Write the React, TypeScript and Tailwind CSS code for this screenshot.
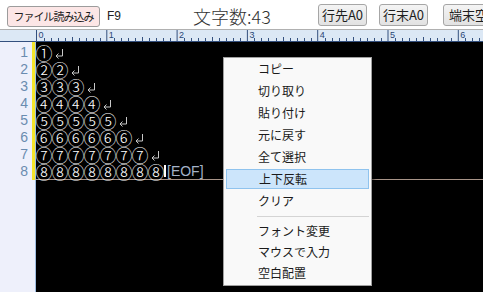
import React from 'react';

const JP = { fontFamily: '"Noto Sans CJK JP", "Noto Sans", sans-serif' };
const circled = ['①', '②', '③', '④', '⑤', '⑥', '⑦', '⑧'];
const menuTop = ['コピー', '切り取り', '貼り付け', '元に戻す', '全て選択', '上下反転', 'クリア'];
const menuBottom = ['フォント変更', 'マウスで入力', '空白配置'];

function ReturnMark() {
  return (
    <svg width="10" height="11" viewBox="0 0 10 11" className="ml-[2px] mt-[4px] shrink-0">
      <path d="M8.5 1 V8 H2" stroke="#c8c8c8" strokeWidth="1" fill="none" />
      <path d="M4.5 5.5 L2 8 L4.5 10.5" stroke="#c8c8c8" strokeWidth="1" fill="none" />
    </svg>
  );
}

function Ruler() {
  const majors = [0, 1, 2, 3, 4, 5, 6];
  return (
    <svg width="483" height="12" className="block">
      <rect x="0" y="0" width="483" height="12" fill="#dce8f5" />
      <line x1="0" y1="11.5" x2="483" y2="11.5" stroke="#34507e" strokeWidth="1" />
      {majors.map((m) => {
        const x = 36.5 + m * 70.3;
        return (
          <g key={m}>
            <line x1={x} y1="0" x2={x} y2="12" stroke="#34507e" strokeWidth="1" />
            <text x={x + 2} y="8" fontSize="9" fill="#2a4676" fontFamily="Liberation Sans, sans-serif">
              {m}
            </text>
            {[1, 2, 3, 4, 5, 6, 7, 8, 9].map((j) => (
              <line
                key={j}
                x1={Math.round(x + j * 7.03) + 0.5}
                y1={j === 5 ? 7 : 8}
                x2={Math.round(x + j * 7.03) + 0.5}
                y2="11"
                stroke="#34507e"
                strokeWidth="1"
              />
            ))}
          </g>
        );
      })}
    </svg>
  );
}

export default function App() {
  return (
    <div className="relative flex h-[292px] w-[483px] flex-col overflow-hidden bg-white">
      {/* toolbar */}
      <div className="flex h-[30px] shrink-0 items-start border-b border-[#b0b0b0] bg-white">
        <button
          className="ml-[7px] mt-[6px] flex h-[21px] w-[93px] shrink-0 items-center justify-center rounded-[3px] border border-[#9c9c9c] bg-[#fce6e6] text-[11px] tracking-[-1px] text-[#1e1e1e]"
          style={JP}
        >
          ファイル読み込み
        </button>
        <span className="ml-[7px] mt-[10px] w-[86px] shrink-0 text-[12px] leading-[12px] text-[#222]" style={{ fontFamily: '"Liberation Sans", sans-serif' }}>
          F9
        </span>
        <span className="mt-[5px] w-[125px] shrink-0 text-[18px] font-light leading-[22px] text-[#333]" style={JP}>
          文字数:43
        </span>
        <button
          className="mt-[4px] flex h-[22px] w-[49px] shrink-0 items-center justify-center rounded-[3px] border border-[#a6a6a6] bg-gradient-to-b from-[#f4f4f4] to-[#e2e2e2] text-[13px] text-[#1e1e1e]"
          style={JP}
        >
          行先A0
        </button>
        <button
          className="ml-[12px] mt-[4px] flex h-[22px] w-[49px] shrink-0 items-center justify-center rounded-[3px] border border-[#a6a6a6] bg-gradient-to-b from-[#f4f4f4] to-[#e2e2e2] text-[13px] text-[#1e1e1e]"
          style={JP}
        >
          行末A0
        </button>
        <button
          className="ml-[15px] mt-[4px] flex h-[22px] w-[49px] shrink-0 items-center justify-start rounded-[3px] border border-[#a6a6a6] bg-gradient-to-b from-[#f4f4f4] to-[#e2e2e2] pl-[5px] text-[13px] text-[#1e1e1e]"
          style={JP}
        >
          端末空
        </button>
      </div>

      {/* ruler */}
      <div className="h-[12px] shrink-0">
        <Ruler />
      </div>

      {/* editor */}
      <div className="flex flex-1">
        <div className="w-[32px] shrink-0 bg-[#eef0fb] pt-[2px]">
          {circled.map((_, i) => (
            <div
              key={i}
              className="h-[17px] pr-[4px] text-right text-[14px] leading-[17px] text-[#6a8cb0]"
              style={{ fontFamily: '"Liberation Sans", sans-serif' }}
            >
              {i + 1}
            </div>
          ))}
        </div>
        <div className="w-[3px] shrink-0 bg-[#eef0fb]">
          <div className="h-[138px] bg-[#f4e52a]" />
        </div>
        <div className="w-px shrink-0 bg-[#9fbde0]" />
        <div className="flex-1 bg-black pt-[2px]">
          {circled.map((c, i) => (
            <div
              key={i}
              className={`flex h-[17px] items-start ${i === 7 ? 'border-b border-[#a89488]' : ''}`}
            >
              {Array.from({ length: i + 1 }).map((_, k) => (
                <span
                  key={k}
                  className="flex h-[17px] w-[16px] shrink-0 items-center justify-center text-[17px] font-extralight leading-[17px] text-white"
                  style={JP}
                >
                  {c}
                </span>
              ))}
              {i < 7 ? (
                <ReturnMark />
              ) : (
                <>
                  <span className="mt-[2px] h-[12px] w-[2px] shrink-0 bg-white" />
                  <span
                    className="ml-[1px] text-[14px] leading-[16px] text-[#a4b2c8]"
                    style={{ fontFamily: '"Liberation Sans", sans-serif' }}
                  >
                    [EOF]
                  </span>
                </>
              )}
            </div>
          ))}
        </div>
      </div>

      {/* context menu */}
      <div
        className="absolute left-[223px] top-[57px] w-[149px] border border-[#a0a0a0] bg-[#f9f9f9] pb-[2px] shadow-[2px_2px_3px_rgba(0,0,0,0.5)]"
        style={JP}
      >
        {menuTop.map((t) => (
          <div key={t} className="h-[22px] px-[2px] py-[1px]">
            <div
              className={`flex h-[20px] items-center pl-[32px] text-[12px] text-[#1a1a1a] ${
                t === '上下反転' ? 'border border-[#8fc3ee] bg-[#cce5fb] pl-[31px]' : ''
              }`}
            >
              {t}
            </div>
          </div>
        ))}
        <div className="flex h-[8px] items-center pl-[33px] pr-[2px]">
          <div className="h-px flex-1 bg-[#d4d4d4]" />
        </div>
        {menuBottom.map((t) => (
          <div key={t} className="flex h-[21px] items-center pl-[34px] text-[12px] text-[#1a1a1a]">
            {t}
          </div>
        ))}
      </div>
    </div>
  );
}
